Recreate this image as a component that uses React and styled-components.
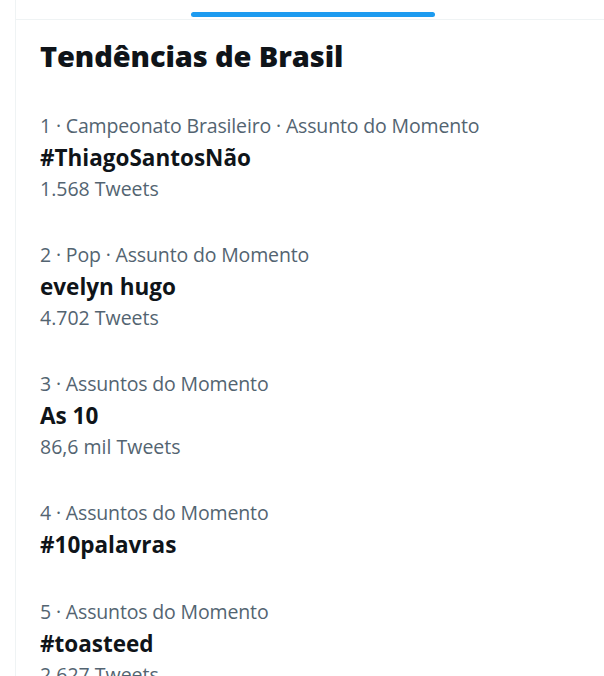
import React from "react";
import styled, { createGlobalStyle } from "styled-components";

const GlobalStyle = createGlobalStyle`
  html, body {
    margin: 0;
    padding: 0;
    background: #fff;
    overflow: hidden;
  }
  body {
    font-family: "Open Sans", "Noto Sans", Arial, sans-serif;
    color: #0f1419;
    -webkit-font-smoothing: antialiased;
  }
`;

const Page = styled.div`
  display: flex;
  padding-left: 15px;
  height: 676px;
  overflow: hidden;
`;

const Column = styled.section`
  flex: 1;
  border-left: 1px solid #eff3f4;
`;

const TabBar = styled.div`
  height: 19px;
  display: flex;
  align-items: flex-end;
  padding-left: 175px;
  border-bottom: 1px solid #eff3f4;
`;

const Indicator = styled.div`
  width: 244px;
  height: 5px;
  margin-bottom: 2px;
  border-radius: 9999px;
  background: #1d9bf0;
`;

const Header = styled.h2`
  margin: 0;
  padding: 18px 24px 22px;
  font-size: 29px;
  line-height: 36px;
  font-weight: 800;
  letter-spacing: -0.1px;
  color: #0f1419;
`;

const List = styled.div`
  display: flex;
  flex-direction: column;
`;

const Item = styled.div`
  flex-shrink: 0;
  padding: 14px 24px 21px;
  display: flex;
  flex-direction: column;
`;

const Meta = styled.div`
  font-size: 19.5px;
  line-height: 32px;
  letter-spacing: -0.15px;
  color: #536471;
`;

const Title = styled.div`
  font-size: 22.5px;
  line-height: 32px;
  font-weight: 700;
  color: #0f1419;
`;

const Count = styled.div`
  font-size: 19.5px;
  line-height: 30px;
  color: #536471;
`;

const trends = [
  { meta: "1 · Campeonato Brasileiro · Assunto do Momento", title: "#ThiagoSantosNão", count: "1.568 Tweets" },
  { meta: "2 · Pop · Assunto do Momento", title: "evelyn hugo", count: "4.702 Tweets" },
  { meta: "3 · Assuntos do Momento", title: "As 10", count: "86,6 mil Tweets" },
  { meta: "4 · Assuntos do Momento", title: "#10palavras" },
  { meta: "5 · Assuntos do Momento", title: "#toasteed", count: "2.627 Tweets" },
];

export default function App() {
  return (
    <>
      <GlobalStyle />
      <Page>
        <Column>
          <TabBar>
            <Indicator />
          </TabBar>
          <Header>Tendências de Brasil</Header>
          <List>
            {trends.map((t) => (
              <Item key={t.title}>
                <Meta>{t.meta}</Meta>
                <Title>{t.title}</Title>
                {t.count && <Count>{t.count}</Count>}
              </Item>
            ))}
          </List>
        </Column>
      </Page>
    </>
  );
}
